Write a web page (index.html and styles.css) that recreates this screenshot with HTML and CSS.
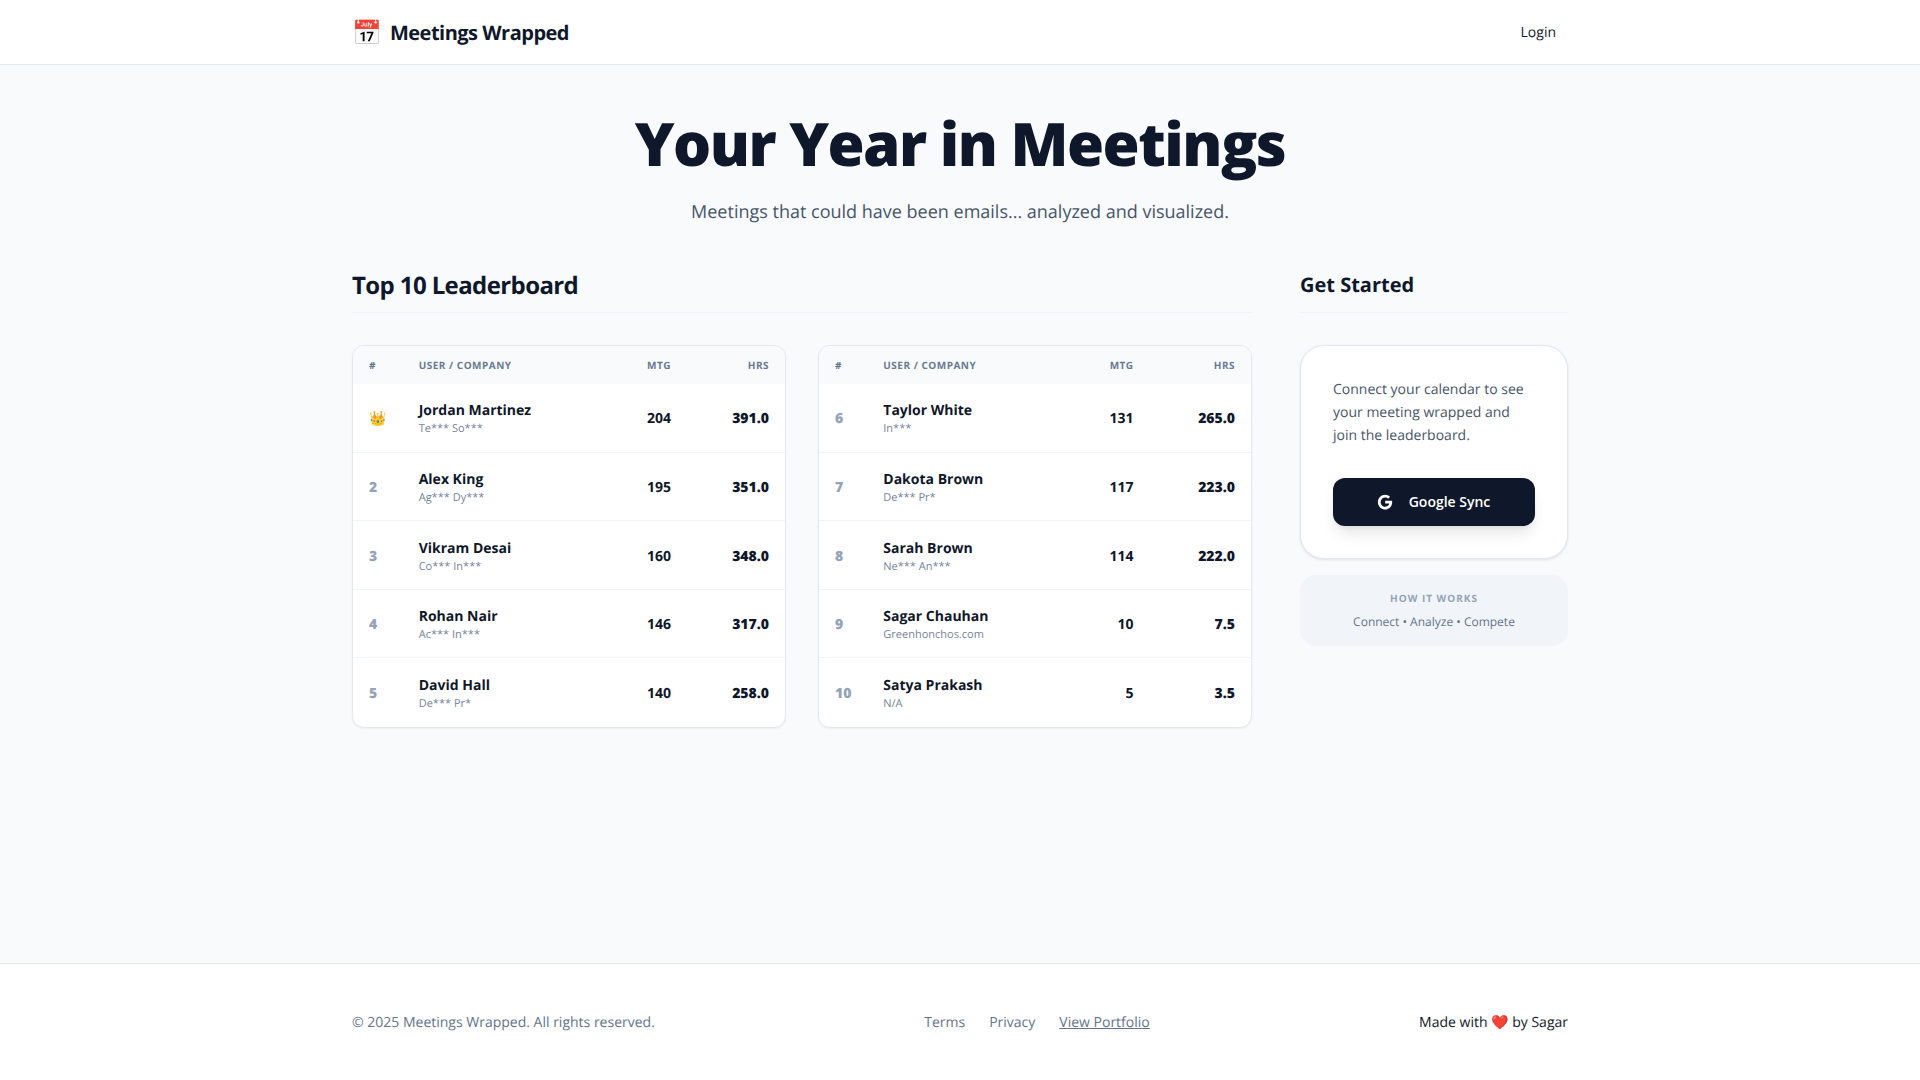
FILE: index.html
```html
<!DOCTYPE html>
<html lang="en">
<head>
<meta charset="utf-8">
<title>Meetings Wrapped</title>
<link rel="stylesheet" href="styles.css">
</head>
<body>
<header class="topbar">
  <div class="topbar-inner">
    <div class="brand"><span class="brand-icon">📅</span><span class="brand-name">Meetings Wrapped</span></div>
    <a class="login">Login</a>
  </div>
</header>
<main class="main">
  <section class="hero">
    <h1>Your Year in Meetings</h1>
    <p>Meetings that could have been emails... analyzed and visualized.</p>
  </section>
  <div class="columns">
    <section class="board">
      <h2 class="heading heading-lg">Top 10 Leaderboard</h2>
      <div class="tables">
        <div class="table table-a">
          <div class="row head"><span class="c-rank">#</span><span class="c-user">User / Company</span><span class="c-mtg">Mtg</span><span class="c-hrs">Hrs</span></div>
          <div class="row"><span class="c-rank crown">👑</span><div class="c-user"><div class="name">Jordan Martinez</div><div class="company">Te*** So***</div></div><span class="c-mtg">204</span><span class="c-hrs">391.0</span></div>
          <div class="row"><span class="c-rank">2</span><div class="c-user"><div class="name">Alex King</div><div class="company">Ag*** Dy***</div></div><span class="c-mtg">195</span><span class="c-hrs">351.0</span></div>
          <div class="row"><span class="c-rank">3</span><div class="c-user"><div class="name">Vikram Desai</div><div class="company">Co*** In***</div></div><span class="c-mtg">160</span><span class="c-hrs">348.0</span></div>
          <div class="row"><span class="c-rank">4</span><div class="c-user"><div class="name">Rohan Nair</div><div class="company">Ac*** In***</div></div><span class="c-mtg">146</span><span class="c-hrs">317.0</span></div>
          <div class="row"><span class="c-rank">5</span><div class="c-user"><div class="name">David Hall</div><div class="company">De*** Pr*</div></div><span class="c-mtg">140</span><span class="c-hrs">258.0</span></div>
        </div>
        <div class="table table-b">
          <div class="row head"><span class="c-rank">#</span><span class="c-user">User / Company</span><span class="c-mtg">Mtg</span><span class="c-hrs">Hrs</span></div>
          <div class="row"><span class="c-rank">6</span><div class="c-user"><div class="name">Taylor White</div><div class="company">In***</div></div><span class="c-mtg">131</span><span class="c-hrs">265.0</span></div>
          <div class="row"><span class="c-rank">7</span><div class="c-user"><div class="name">Dakota Brown</div><div class="company">De*** Pr*</div></div><span class="c-mtg">117</span><span class="c-hrs">223.0</span></div>
          <div class="row"><span class="c-rank">8</span><div class="c-user"><div class="name">Sarah Brown</div><div class="company">Ne*** An***</div></div><span class="c-mtg">114</span><span class="c-hrs">222.0</span></div>
          <div class="row"><span class="c-rank">9</span><div class="c-user"><div class="name">Sagar Chauhan</div><div class="company">Greenhonchos.com</div></div><span class="c-mtg">10</span><span class="c-hrs">7.5</span></div>
          <div class="row"><span class="c-rank">10</span><div class="c-user"><div class="name">Satya Prakash</div><div class="company">N/A</div></div><span class="c-mtg">5</span><span class="c-hrs">3.5</span></div>
        </div>
      </div>
    </section>
    <aside class="side">
      <h2 class="heading heading-sm">Get Started</h2>
      <div class="card">
        <p>Connect your calendar to see your meeting wrapped and join the leaderboard.</p>
        <button class="sync">
          <svg class="g" viewBox="0 0 24 24" width="18" height="18"><path fill="#fff" d="M12.24 10.29v3.86h5.5c-.22 1.42-1.66 4.16-5.5 4.16-3.31 0-6.01-2.74-6.01-6.12s2.7-6.12 6.01-6.12c1.88 0 3.14.8 3.86 1.49l2.63-2.54C17.04 3.42 14.86 2.4 12.24 2.4 6.87 2.4 2.52 6.75 2.52 12.19s4.35 9.79 9.72 9.79c5.61 0 9.33-3.94 9.33-9.49 0-.64-.07-1.13-.15-2.2h-9.18z"/></svg>
          <span class="sync-label">Google Sync</span>
        </button>
      </div>
      <div class="how">
        <div class="how-title">How it works</div>
        <div class="how-text">Connect • Analyze • Compete</div>
      </div>
    </aside>
  </div>
</main>
<footer class="footer">
  <div class="footer-inner">
    <span class="copy">© 2025 Meetings Wrapped. All rights reserved.</span>
    <nav class="links"><a>Terms</a><a>Privacy</a><a class="under">View Portfolio</a></nav>
    <span class="made">Made with <span class="heart">❤️</span> by Sagar</span>
  </div>
</footer>
</body>
</html>
```
FILE: styles.css
```css
* { box-sizing: border-box; margin: 0; padding: 0; }
html, body { height: 100%; }
body {
  font-family: "Open Sans", "Noto Color Emoji", sans-serif;
  background: #f8fafc;
  color: #0f172a;
  display: flex;
  flex-direction: column;
  min-height: 100vh;
  text-rendering: geometricPrecision;
}
.topbar { background: #fff; border-bottom: 1px solid #e2e8f0; height: 65px; flex: none; }
.topbar-inner {
  max-width: 1280px; margin: 0 auto; padding: 0 32px; height: 64px;
  display: flex; align-items: center; justify-content: space-between;
}
.brand { display: flex; align-items: center; gap: 8px; }
.brand-icon { font-size: 24px; line-height: 32px; padding-top: 2px; }
.brand-name { font-size: 20px; font-weight: 700; letter-spacing: -0.5px; }
.login { font-size: 14px; font-weight: 500; padding: 8px 12px; }
.main { flex: 1; width: 100%; max-width: 1280px; margin: 0 auto; padding: 48px 32px 0; }
.hero { text-align: center; margin-bottom: 43px; }
.hero h1 { font-size: 60px; line-height: 60px; font-weight: 800; letter-spacing: -1.5px; margin-bottom: 25px; }
.hero p { font-size: 18px; line-height: 28px; color: #475569; }
.columns { display: flex; gap: 48px; }
.board { width: 900px; flex: none; }
.side { flex: 1; min-width: 0; }
.heading { height: 44px; border-bottom: 1px solid #f1f5f9; margin-bottom: 32px; font-weight: 700; line-height: 32px; }
.heading-lg { font-size: 24px; letter-spacing: -0.6px; line-height: 34px; }
.heading-sm { font-size: 20px; }
.tables { display: grid; grid-template-columns: 1fr 1fr; gap: 32px; }
.table { background: #fff; border: 1px solid #e2e8f0; border-radius: 12px; overflow: hidden; box-shadow: 0 1px 2px rgba(0,0,0,.05); }
.row {
  display: grid; align-items: center;
  height: 68.6px; padding: 2.3px 16px 0; border-bottom: 1px solid #f1f5f9;
  font-size: 14px; font-weight: 700;
}
.row:last-child { border-bottom: none; }
.table-a .row { grid-template-columns: 49.7px 1fr 72px 98px; }
.table-b .row { grid-template-columns: 48.3px 1fr 71px 101.4px; }
.row.head {
  height: 38px; padding: 0 16px; border-bottom: none; background: #f8fafc; color: #6b7b92;
  font-size: 10px; text-transform: uppercase; letter-spacing: .5px;
}
.c-mtg, .c-hrs { text-align: right; }
.c-hrs { font-weight: 800; }
.c-rank { color: #94a3b8; font-weight: 800; }
.head .c-rank { color: #64748b; font-weight: 700; }
.head .c-hrs { font-weight: 700; }
.crown { font-size: 14px; }
.name { font-size: 14px; line-height: 20px; font-weight: 700; }
.company { font-size: 11px; line-height: 15px; font-weight: 400; color: #748399; }
.card { background: #fff; border: 1px solid #e2e8f0; border-radius: 24px; padding: 33px 32px 32px; box-shadow: 0 1px 3px rgba(0,0,0,.1); }
.card p { font-size: 14px; line-height: 22.75px; color: #475569; margin-bottom: 31px; }
.sync {
  width: 100%; height: 48px; border: none; border-radius: 12px; background: #0f172a; color: #fff;
  font-family: inherit; font-size: 14px; font-weight: 600; display: flex; align-items: center; justify-content: center; gap: 15px;
  padding-right: 2px;
  box-shadow: 0 10px 15px -3px rgba(0,0,0,.1), 0 4px 6px -4px rgba(0,0,0,.1);
}
.sync-label { margin-bottom: 1px; }
.how { margin-top: 16px; background: #f1f5f9; border-radius: 16px; padding: 16px; text-align: center; height: 71px; }
.how-title { font-size: 10px; line-height: 14px; font-weight: 700; color: #94a3b8; text-transform: uppercase; letter-spacing: 1px; margin-bottom: 9px; }
.how-text { font-size: 12px; line-height: 16px; color: #64748b; }
.footer { background: #fff; border-top: 1px solid #e2e8f0; flex: none; height: 117px; }
.footer-inner {
  max-width: 1280px; margin: 0 auto; padding: 0 32px; height: 116px;
  display: flex; align-items: center; justify-content: space-between; font-size: 14px;
}
.copy { color: #64748b; }
.links { display: flex; gap: 24px; color: #64748b; }
.under { text-decoration: underline; }
.made { color: #0f172a; }
```
